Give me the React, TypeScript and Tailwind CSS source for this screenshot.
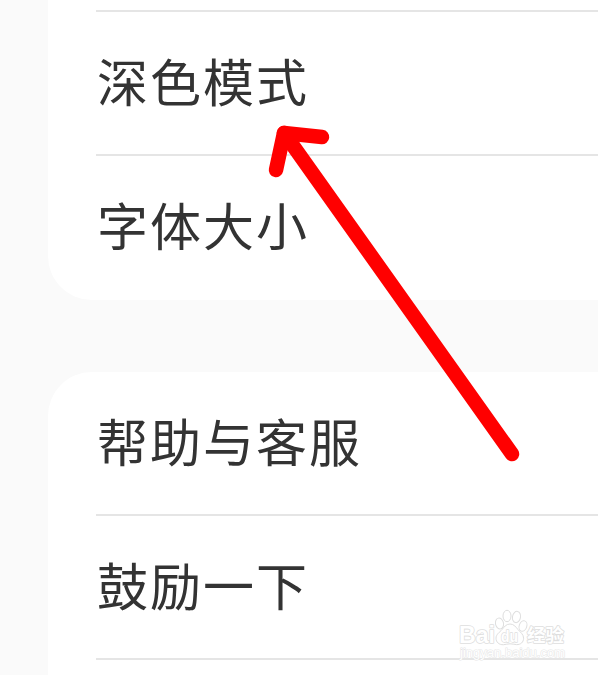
import clsx from "clsx";

const displayItems = ["深色模式", "字体大小"];
const supportItems = ["帮助与客服", "鼓励一下"];

function SettingRow({ label, divider }: { label: string; divider: boolean }) {
  return (
    <div
      className={clsx(
        "flex h-36 items-center whitespace-nowrap border-b-2 pb-1.5 pl-px text-[51px] leading-[72px] tracking-[2px] text-[#333333]",
        divider ? "border-[#e5e5e5]" : "border-transparent"
      )}
    >
      {label}
    </div>
  );
}

function Arrow() {
  return (
    <svg
      className="pointer-events-none absolute left-0 top-0"
      width="598"
      height="675"
      viewBox="0 0 598 675"
      fill="none"
      stroke="#ff0000"
      strokeLinecap="round"
      strokeLinejoin="round"
      strokeWidth="14.5"
    >
      <path d="M284 133 512 454" />
      <path d="M276 170 284 133 322 137" />
    </svg>
  );
}

function Watermark() {
  return (
    <svg
      className="pointer-events-none absolute left-[450px] top-[600px]"
      width="130"
      height="70"
      viewBox="0 0 130 70"
      fill="#ffffff"
      stroke="#dedede"
      strokeWidth="1"
      strokeLinejoin="round"
      fontFamily="'Liberation Sans', sans-serif"
    >
      <text x="9" y="43" fontSize="24" fontWeight="700" strokeWidth="1.6" paintOrder="stroke" textLength="36" lengthAdjust="spacingAndGlyphs">
        Bai
      </text>
      <ellipse cx="49.5" cy="23.5" rx="4" ry="5.5" transform="rotate(-12 49.5 23.5)" />
      <ellipse cx="57" cy="16" rx="4" ry="5.7" />
      <ellipse cx="66.5" cy="17" rx="4" ry="5.7" transform="rotate(10 66.5 17)" />
      <ellipse cx="73" cy="26" rx="3.8" ry="5.4" transform="rotate(18 73 26)" />
      <path d="M60 24c4 0 6 3.2 8 5.6 2.2 2.6 5.6 4.600 5.600 8.600 0 4-3 6.600-7 6.400-2.400-.2-4.200-.8-6.600-.8s-4.200.8-6.600.9c-4.200.2-7.400-2.400-7.400-6.500 0-4 3.800-6 6-8.600 2-2.400 4-5.600 8-5.600Z" />
      <text x="51" y="41.5" fontSize="16" fontWeight="700" strokeWidth="1.4" paintOrder="stroke" textLength="17" lengthAdjust="spacingAndGlyphs">
        du
      </text>
      <text x="77" y="42" fontSize="18.5" fontWeight="700" strokeWidth="1.6" paintOrder="stroke" fontFamily="'Noto Sans CJK SC', sans-serif" textLength="37" lengthAdjust="spacingAndGlyphs">
        经验
      </text>
      <text x="10" y="57" fontSize="12" stroke="#e6e6e6" strokeWidth="1" paintOrder="stroke" textLength="105" lengthAdjust="spacingAndGlyphs">
        jingyan.baidu.com
      </text>
    </svg>
  );
}

export default function App() {
  return (
    <main className="relative h-[675px] w-[598px] overflow-hidden bg-[#fafafa] pl-12 font-['Noto_Sans_CJK_SC',sans-serif]">
      <section className="rounded-bl-[44px] bg-white pl-12">
        <div className="h-3 border-b-2 border-[#e5e5e5]" />
        {displayItems.map((label, index) => (
          <SettingRow key={label} label={label} divider={index < displayItems.length - 1} />
        ))}
      </section>

      <section className="mt-[72px] h-[320px] rounded-tl-[44px] bg-white pl-12">
        {supportItems.map((label) => (
          <SettingRow key={label} label={label} divider />
        ))}
      </section>

      <Arrow />
      <Watermark />
    </main>
  );
}
